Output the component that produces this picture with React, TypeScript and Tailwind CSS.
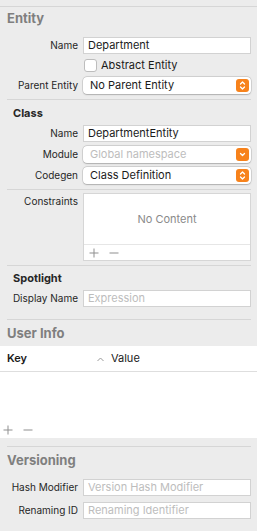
import React from "react";

const font = { fontFamily: "Inter, 'Noto Sans', sans-serif" };

function Separator({ className = "" }: { className?: string }) {
  return <div className={"mx-[7px] h-px w-[244px] bg-[#d6d6d6] " + className} />;
}

function Row({
  label,
  children,
  className = "",
}: {
  label: string;
  children: React.ReactNode;
  className?: string;
}) {
  return (
    <div className={"flex h-[17px] items-center " + className}>
      <div className="w-[78px] whitespace-nowrap text-right text-[10px] text-[#262626]">{label}</div>
      <div className="ml-[5px] h-full w-[168px]">{children}</div>
    </div>
  );
}

function TextField({ value, placeholder }: { value?: string; placeholder?: string }) {
  return (
    <div className="flex h-full items-center border border-[#d2d2d2] bg-white pl-[4px] text-[11px]">
      {value ? (
        <span className="text-[#1a1a1a]">{value}</span>
      ) : (
        <span className="text-[#bdbdbd]">{placeholder}</span>
      )}
    </div>
  );
}

function Popup({ value, disabled, single }: { value: string; disabled?: boolean; single?: boolean }) {
  return (
    <div className="flex h-full items-center justify-between rounded-[4px] bg-white pl-[7px] pr-[2px] shadow-[0_0_0_0.5px_rgba(0,0,0,0.18),0_0.5px_1.5px_rgba(0,0,0,0.18)]">
      <span className={"text-[11px] " + (disabled ? "text-[#bdbdbd]" : "text-[#1a1a1a]")}>{value}</span>
      <div className="flex h-[13px] w-[13px] items-center justify-center rounded-[3px] bg-[#f7821b]">
        <svg width="9" height="11" viewBox="0 0 9 11" fill="none" stroke="white" strokeWidth="1.3" strokeLinecap="round" strokeLinejoin="round">
          {single ? (
            <path d="M2.5 4.5 L4.5 6.5 L6.5 4.5" />
          ) : (
            <>
              <path d="M2.5 4 L4.5 2 L6.5 4" />
              <path d="M2.5 7 L4.5 9 L6.5 7" />
            </>
          )}
        </svg>
      </div>
    </div>
  );
}

function PlusMinus({ className = "" }: { className?: string }) {
  return (
    <div className={"flex items-center " + className}>
      <svg width="10" height="10" viewBox="0 0 10 10" stroke="#8f8f8f" strokeWidth="1">
        <path d="M5 0.5 V9.5 M0.5 5 H9.5" />
      </svg>
      <svg width="10" height="10" viewBox="0 0 10 10" stroke="#8f8f8f" strokeWidth="1" className="ml-[10px]">
        <path d="M0.5 5 H9.5" />
      </svg>
    </div>
  );
}

export default function App() {
  return (
    <div className="h-[531px] w-[257px] overflow-hidden bg-[#ececec]" style={font}>
      <div className="h-[6px]" />
      <div className="h-px w-full bg-[#d6d6d6]" />

      {/* Entity */}
      <div className="mt-[3px] h-[16px] px-[7px] text-[13px] font-bold leading-[16px] text-[#7f7f7f]">Entity</div>
      <Row label="Name" className="mt-[11px]">
        <TextField value="Department" />
      </Row>
      <div className="mt-[4px] flex h-[14px] items-center pl-[84px]">
        <div className="h-[13px] w-[13px] rounded-[3px] border border-[#bdbdbd] bg-white" />
        <span className="ml-[4px] text-[11px] text-[#1a1a1a]">Abstract Entity</span>
      </div>
      <Row label="Parent Entity" className="mt-[5px]">
        <Popup value="No Parent Entity" />
      </Row>
      <Separator className="mt-[5px]" />

      {/* Class */}
      <div className="mt-[6px] h-[14px] pl-[13px] text-[11px] font-bold leading-[14px] text-[#262626]">Class</div>
      <Row label="Name" className="mt-[5px]">
        <TextField value="DepartmentEntity" />
      </Row>
      <Row label="Module" className="mt-[4px]">
        <Popup value="Global namespace" disabled single />
      </Row>
      <Row label="Codegen" className="mt-[4px]">
        <Popup value="Class Definition" />
      </Row>
      <Separator className="mt-[5px]" />

      {/* Constraints */}
      <div className="mt-[3px] flex items-start">
        <div className="mt-[1px] w-[78px] text-right text-[10px] leading-[14px] text-[#262626]">Constraints</div>
        <div className="ml-[5px] flex h-[68px] w-[168px] flex-col border border-[#d6d6d6] bg-white">
          <div className="flex flex-1 items-center justify-center text-[11px] text-[#8a8a8a]">No Content</div>
          <div className="flex h-[16px] items-center border-t border-[#e6e6e6] pl-[5px]">
            <PlusMinus />
          </div>
        </div>
      </div>
      <Separator className="mt-[4px]" />

      {/* Spotlight */}
      <div className="mt-[5px] h-[14px] pl-[13px] text-[11px] font-bold leading-[14px] text-[#262626]">Spotlight</div>
      <Row label="Display Name" className="mt-[5px]">
        <TextField placeholder="Expression" />
      </Row>
      <Separator className="mt-[12px]" />

      {/* User Info */}
      <div className="mt-[5px] h-[16px] px-[7px] text-[13px] font-bold leading-[16px] text-[#7f7f7f]">User Info</div>
      <div className="mt-[5px] flex h-[92px] flex-col bg-white">
        <div className="flex h-[26px] items-center border-b border-[#dedede] text-[11px] text-[#1a1a1a]">
          <span className="w-[97px] pl-[7px] font-semibold">Key</span>
          <svg width="7" height="5" viewBox="0 0 7 5" fill="none" stroke="#9a9a9a" strokeWidth="1" className="mt-[2px]">
            <path d="M0.5 4 L3.5 1 L6.5 4" />
          </svg>
          <span className="ml-[7px]">Value</span>
        </div>
        <div className="flex-1" />
        <div className="flex h-[16px] items-center pl-[3px]">
          <PlusMinus />
        </div>
      </div>
      <Separator className="mt-[8px]" />

      {/* Versioning */}
      <div className="mt-[5px] h-[16px] px-[7px] text-[13px] font-bold leading-[16px] text-[#7f7f7f]">Versioning</div>
      <Row label="Hash Modifier" className="mt-[11px]">
        <TextField placeholder="Version Hash Modifier" />
      </Row>
      <Row label="Renaming ID" className="mt-[6px]">
        <TextField placeholder="Renaming Identifier" />
      </Row>
    </div>
  );
}
